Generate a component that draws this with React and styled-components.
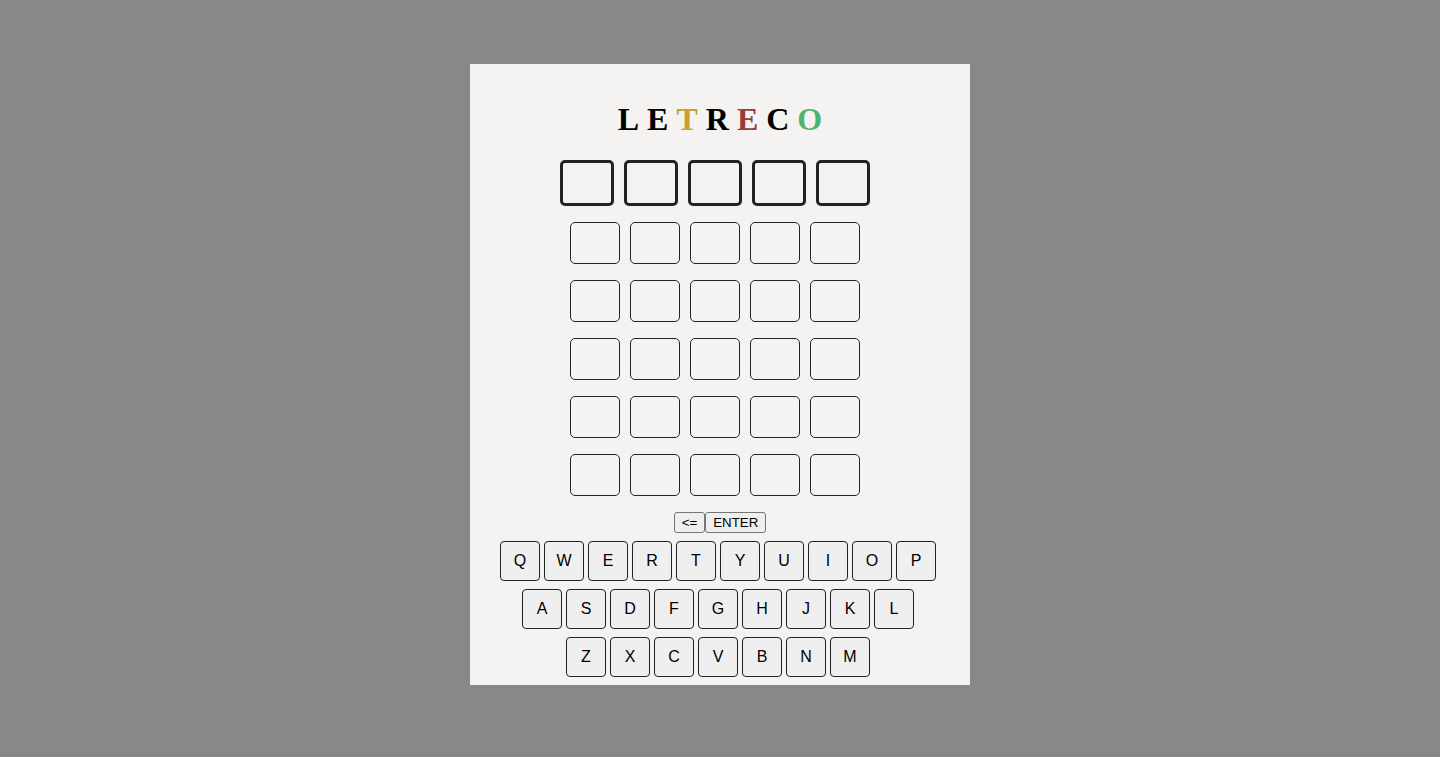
import React from "react";
import styled, { createGlobalStyle } from "styled-components";

const GlobalStyle = createGlobalStyle`
  body {
    margin: 0;
    background: #8b8888;
    font-family: "Liberation Serif", "Times New Roman", serif;
  }
`;

const Page = styled.div`
  box-sizing: border-box;
  min-height: 100vh;
  padding-bottom: 8px;
  display: flex;
  align-items: center;
  justify-content: center;
  background: #8a8788;
`;

const Card = styled.main`
  box-sizing: border-box;
  width: 100%;
  max-width: 500px;
  padding: 37px 0 8px;
  display: flex;
  flex-direction: column;
  align-items: center;
  background: #f4f3f2;
`;

const Title = styled.h1`
  margin: 0 0 22px;
  display: flex;
  gap: 8px;
  font-size: 32px;
  line-height: 37px;
  font-weight: bold;
`;

const TitleLetter = styled.span`
  color: ${({ $color }) => $color || "#000"};
`;

const Board = styled.section`
  display: flex;
  flex-direction: column;
  align-items: center;
  gap: 16px;
  margin-bottom: 16px;
`;

const Guess = styled.div`
  display: flex;
`;

const Cell = styled.div`
  width: 48px;
  height: 40px;
  margin-right: 10px;
  border: ${({ $active }) => ($active ? 3 : 1)}px solid #212323;
  border-radius: 5px;
`;

const Actions = styled.div`
  display: flex;
  margin-bottom: 8px;
`;

const ActionButton = styled.button`
  height: 21px;
  padding: 1px 7px;
  border: 1px solid #767676;
  border-radius: 3px;
  background: #efefef;
  color: #000;
  font-family: "Liberation Sans", Arial, sans-serif;
`;

const Keyboard = styled.section`
  display: flex;
  flex-direction: column;
  align-items: center;
  gap: 8px;
`;

const KeyRow = styled.div`
  display: flex;
`;

const Key = styled.button`
  width: 40px;
  height: 40px;
  margin-right: 4px;
  padding: 0;
  border: 1px solid #212323;
  border-radius: 4px;
  background: #efefef;
  color: #000;
  font-family: "Liberation Sans", Arial, sans-serif;
  font-size: 16px;
`;

const title = [
  ["L"],
  ["E"],
  ["T", "#c9a032"],
  ["R"],
  ["E", "#963e3e"],
  ["C"],
  ["O", "#4cb56c"],
];

const guesses = [0, 1, 2, 3, 4, 5];
const columns = [0, 1, 2, 3, 4];
const keyRows = ["QWERTYUIOP", "ASDFGHJKL", "ZXCVBNM"];

export default function App() {
  return (
    <Page>
      <GlobalStyle />
      <Card>
        <Title>
          {title.map(([letter, color], i) => (
            <TitleLetter key={i} $color={color}>
              {letter}
            </TitleLetter>
          ))}
        </Title>
        <Board>
          {guesses.map((row) => (
            <Guess key={row}>
              {columns.map((column) => (
                <Cell key={column} $active={row === 0} />
              ))}
            </Guess>
          ))}
        </Board>
        <Actions>
          <ActionButton type="button">&lt;=</ActionButton>
          <ActionButton type="button">ENTER</ActionButton>
        </Actions>
        <Keyboard>
          {keyRows.map((row) => (
            <KeyRow key={row}>
              {row.split("").map((letter) => (
                <Key key={letter} type="button">
                  {letter}
                </Key>
              ))}
            </KeyRow>
          ))}
        </Keyboard>
      </Card>
    </Page>
  );
}
